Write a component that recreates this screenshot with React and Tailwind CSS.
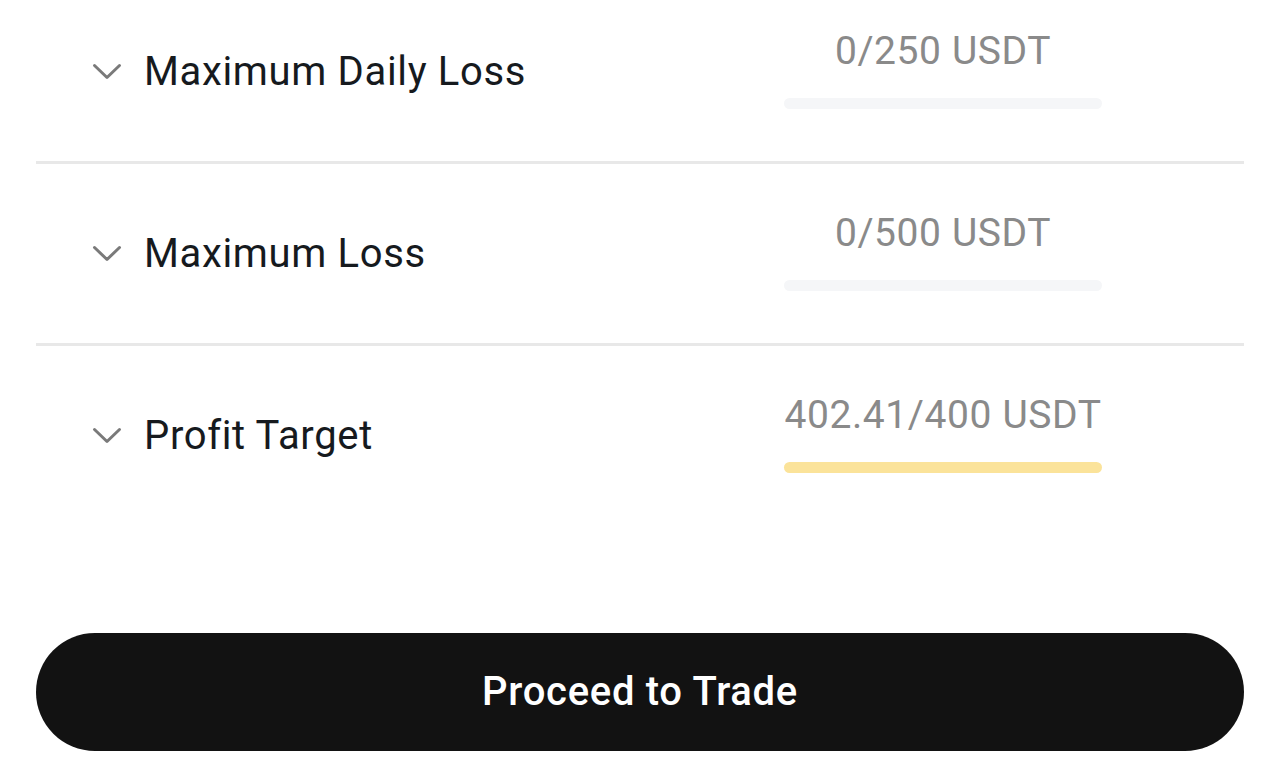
const rows = [
  { label: 'Maximum Daily Loss', value: '0/250 USDT', done: false },
  { label: 'Maximum Loss', value: '0/500 USDT', done: false },
  { label: 'Profit Target', value: '402.41/400 USDT', done: true },
];

function Chevron() {
  return (
    <svg width="30" height="18" viewBox="0 0 30 18" fill="none" className="shrink-0">
      <path d="M2.5 2.5L15 14.5L27.5 2.5" stroke="#7a7a7a" strokeWidth="3" strokeLinecap="round" strokeLinejoin="round" />
    </svg>
  );
}

function Row({ label, value, done, last }) {
  return (
    <div className={last ? '' : 'border-b-[3px] border-[#e8e8e8]'}>
      <div className="flex h-[179px] items-center justify-between pl-[56px] pr-[142px]">
        <div className="flex items-center gap-[22px]">
          <Chevron />
          <span className="text-[40px] leading-none tracking-[0.65px] text-[#161a1e]">{label}</span>
        </div>
        <div className="mb-[6px] flex w-[318px] flex-col items-center">
          <span className="text-[39px] leading-[44px] tracking-[0.6px] text-[#8a8a8a]">{value}</span>
          <div className={`mt-[25px] h-[11px] w-full rounded-full ${done ? 'bg-[#fbe39a]' : 'bg-[#f5f6f8]'}`} />
        </div>
      </div>
    </div>
  );
}

export default function App() {
  return (
    <div className="h-[763px] overflow-hidden bg-white px-[36px] font-['Roboto',sans-serif]">
      <div className="mt-[-18px]">
        {rows.map((r, i) => (
          <Row key={r.label} {...r} last={i === rows.length - 1} />
        ))}
      </div>
      <button className="mt-[108px] flex h-[118px] w-full items-center justify-center rounded-full bg-[#121212] text-[40px] font-medium tracking-[0.7px] text-white">
        Proceed to Trade
      </button>
    </div>
  );
}
